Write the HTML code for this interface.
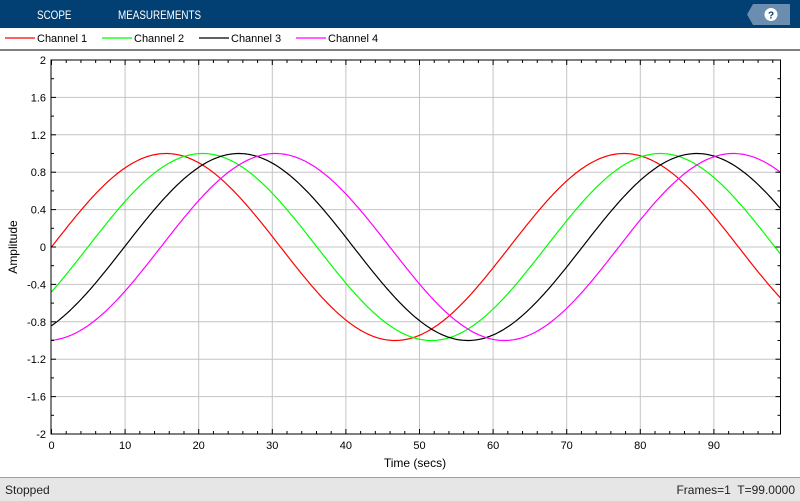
<!DOCTYPE html>
<html><head><meta charset="utf-8"><style>
body{margin:0;width:800px;height:500px;overflow:hidden;background:#fff;font-family:"Liberation Sans",sans-serif;position:relative}
.hdr{position:absolute;left:0;top:0;width:800px;height:28px;background:#023f72}
.hdr span{position:absolute;top:8px;color:#fff;font-size:12px;transform:scaleX(0.82);transform-origin:0 0}
.status{position:absolute;left:0;top:477px;width:800px;height:23px;background:#e6e6e6;border-top:1px solid #a0a0a0;font-size:12px;color:#222}
</style></head><body>
<div class="hdr"><span style="left:37px">SCOPE</span><span style="left:118px">MEASUREMENTS</span>
<svg style="position:absolute;left:745px;top:2px" width="46" height="24"><polygon points="8,2 45,2 45,23 8,23 2,12.5" fill="#6b8db0"/><circle cx="26" cy="12.5" r="6.5" fill="#fff"/><text x="26" y="16.5" font-size="10" font-weight="bold" text-anchor="middle" fill="#023f72" font-family="Liberation Sans">?</text></svg></div>
<svg id="s" style="position:absolute;left:0;top:28px" width="800" height="449"></svg>
<div class="status"><span style="position:absolute;left:5px;top:5px">Stopped</span><span style="position:absolute;right:5px;top:5px">Frames=1&nbsp; T=99.0000</span></div>
<script>
var s='',T=28,XR=780.5;
function X(t){return 51.5+t*7.36}
function Y(v){return 60-T+(2-v)*93.5}
var cols=['#ff0000','#00ff00','#000000','#ff00ff'],lx=[5,102,199,296];
for(var i=0;i<4;i++){s+='<line x1="'+lx[i]+'" y1="10" x2="'+(lx[i]+30)+'" y2="10" stroke="'+cols[i]+'" stroke-width="1.2"/><text x="'+(lx[i]+32)+'" y="14" font-size="11" font-family="Liberation Sans">Channel '+(i+1)+'</text>';}
s+='<line x1="0" y1="22" x2="800" y2="22" stroke="#000"/>';
for(var t=10;t<=90;t+=10)s+='<line x1="'+X(t)+'" y1="'+Y(2)+'" x2="'+X(t)+'" y2="'+Y(-2)+'" stroke="#c4c4c4"/>';
for(var k=-4;k<=4;k++){var v=k*0.4;s+='<line x1="51" y1="'+Y(v)+'" x2="'+XR+'" y2="'+Y(v)+'" stroke="#c4c4c4"/>';}
for(var i=0;i<4;i++){var p=[];for(var x=51.5;x<=XR;x+=2){p.push(x.toFixed(1)+','+Y(Math.sin(2*Math.PI*(x-51.5)/458-0.5*i)).toFixed(1));}
p.push(XR+','+Y(Math.sin(2*Math.PI*(XR-51.5)/458-0.5*i)).toFixed(1));
s+='<polyline points="'+p.join(' ')+'" fill="none" stroke="'+cols[i]+'" stroke-width="1.2"/>';}
s+='<rect x="51" y="'+Y(2)+'" width="'+(XR-51)+'" height="374" fill="none" stroke="#000"/>';
for(var t=0;t<100;t+=2){var l=(t%10==0)?5:3;s+='<line x1="'+X(t)+'" y1="'+Y(2)+'" x2="'+X(t)+'" y2="'+(Y(2)+l)+'" stroke="#000"/><line x1="'+X(t)+'" y1="'+Y(-2)+'" x2="'+X(t)+'" y2="'+(Y(-2)-l)+'" stroke="#000"/>';}
for(var k=-10;k<=10;k++){var v=k*0.2,l=(k%2==0)?5:3;s+='<line x1="51" y1="'+Y(v)+'" x2="'+(51+l)+'" y2="'+Y(v)+'" stroke="#000"/><line x1="'+XR+'" y1="'+Y(v)+'" x2="'+(XR-l)+'" y2="'+Y(v)+'" stroke="#000"/>';}
for(var t=0;t<=90;t+=10)s+='<text x="'+X(t)+'" y="'+(Y(-2)+15)+'" font-size="11" text-anchor="middle" font-family="Liberation Sans">'+t+'</text>';
for(var k=-5;k<=5;k++){var v=k*0.4,lab=(Math.round(v*10)/10).toString();s+='<text x="46" y="'+(Y(v)+4)+'" font-size="11" text-anchor="end" font-family="Liberation Sans">'+lab+'</text>';}
s+='<text x="415" y="'+(Y(-2)+33)+'" font-size="12" text-anchor="middle" font-family="Liberation Sans">Time (secs)</text>';
s+='<text transform="translate(17,'+Y(0)+') rotate(-90)" font-size="12" text-anchor="middle" font-family="Liberation Sans">Amplitude</text>';
document.getElementById('s').innerHTML=s;
</script>
</body></html>
